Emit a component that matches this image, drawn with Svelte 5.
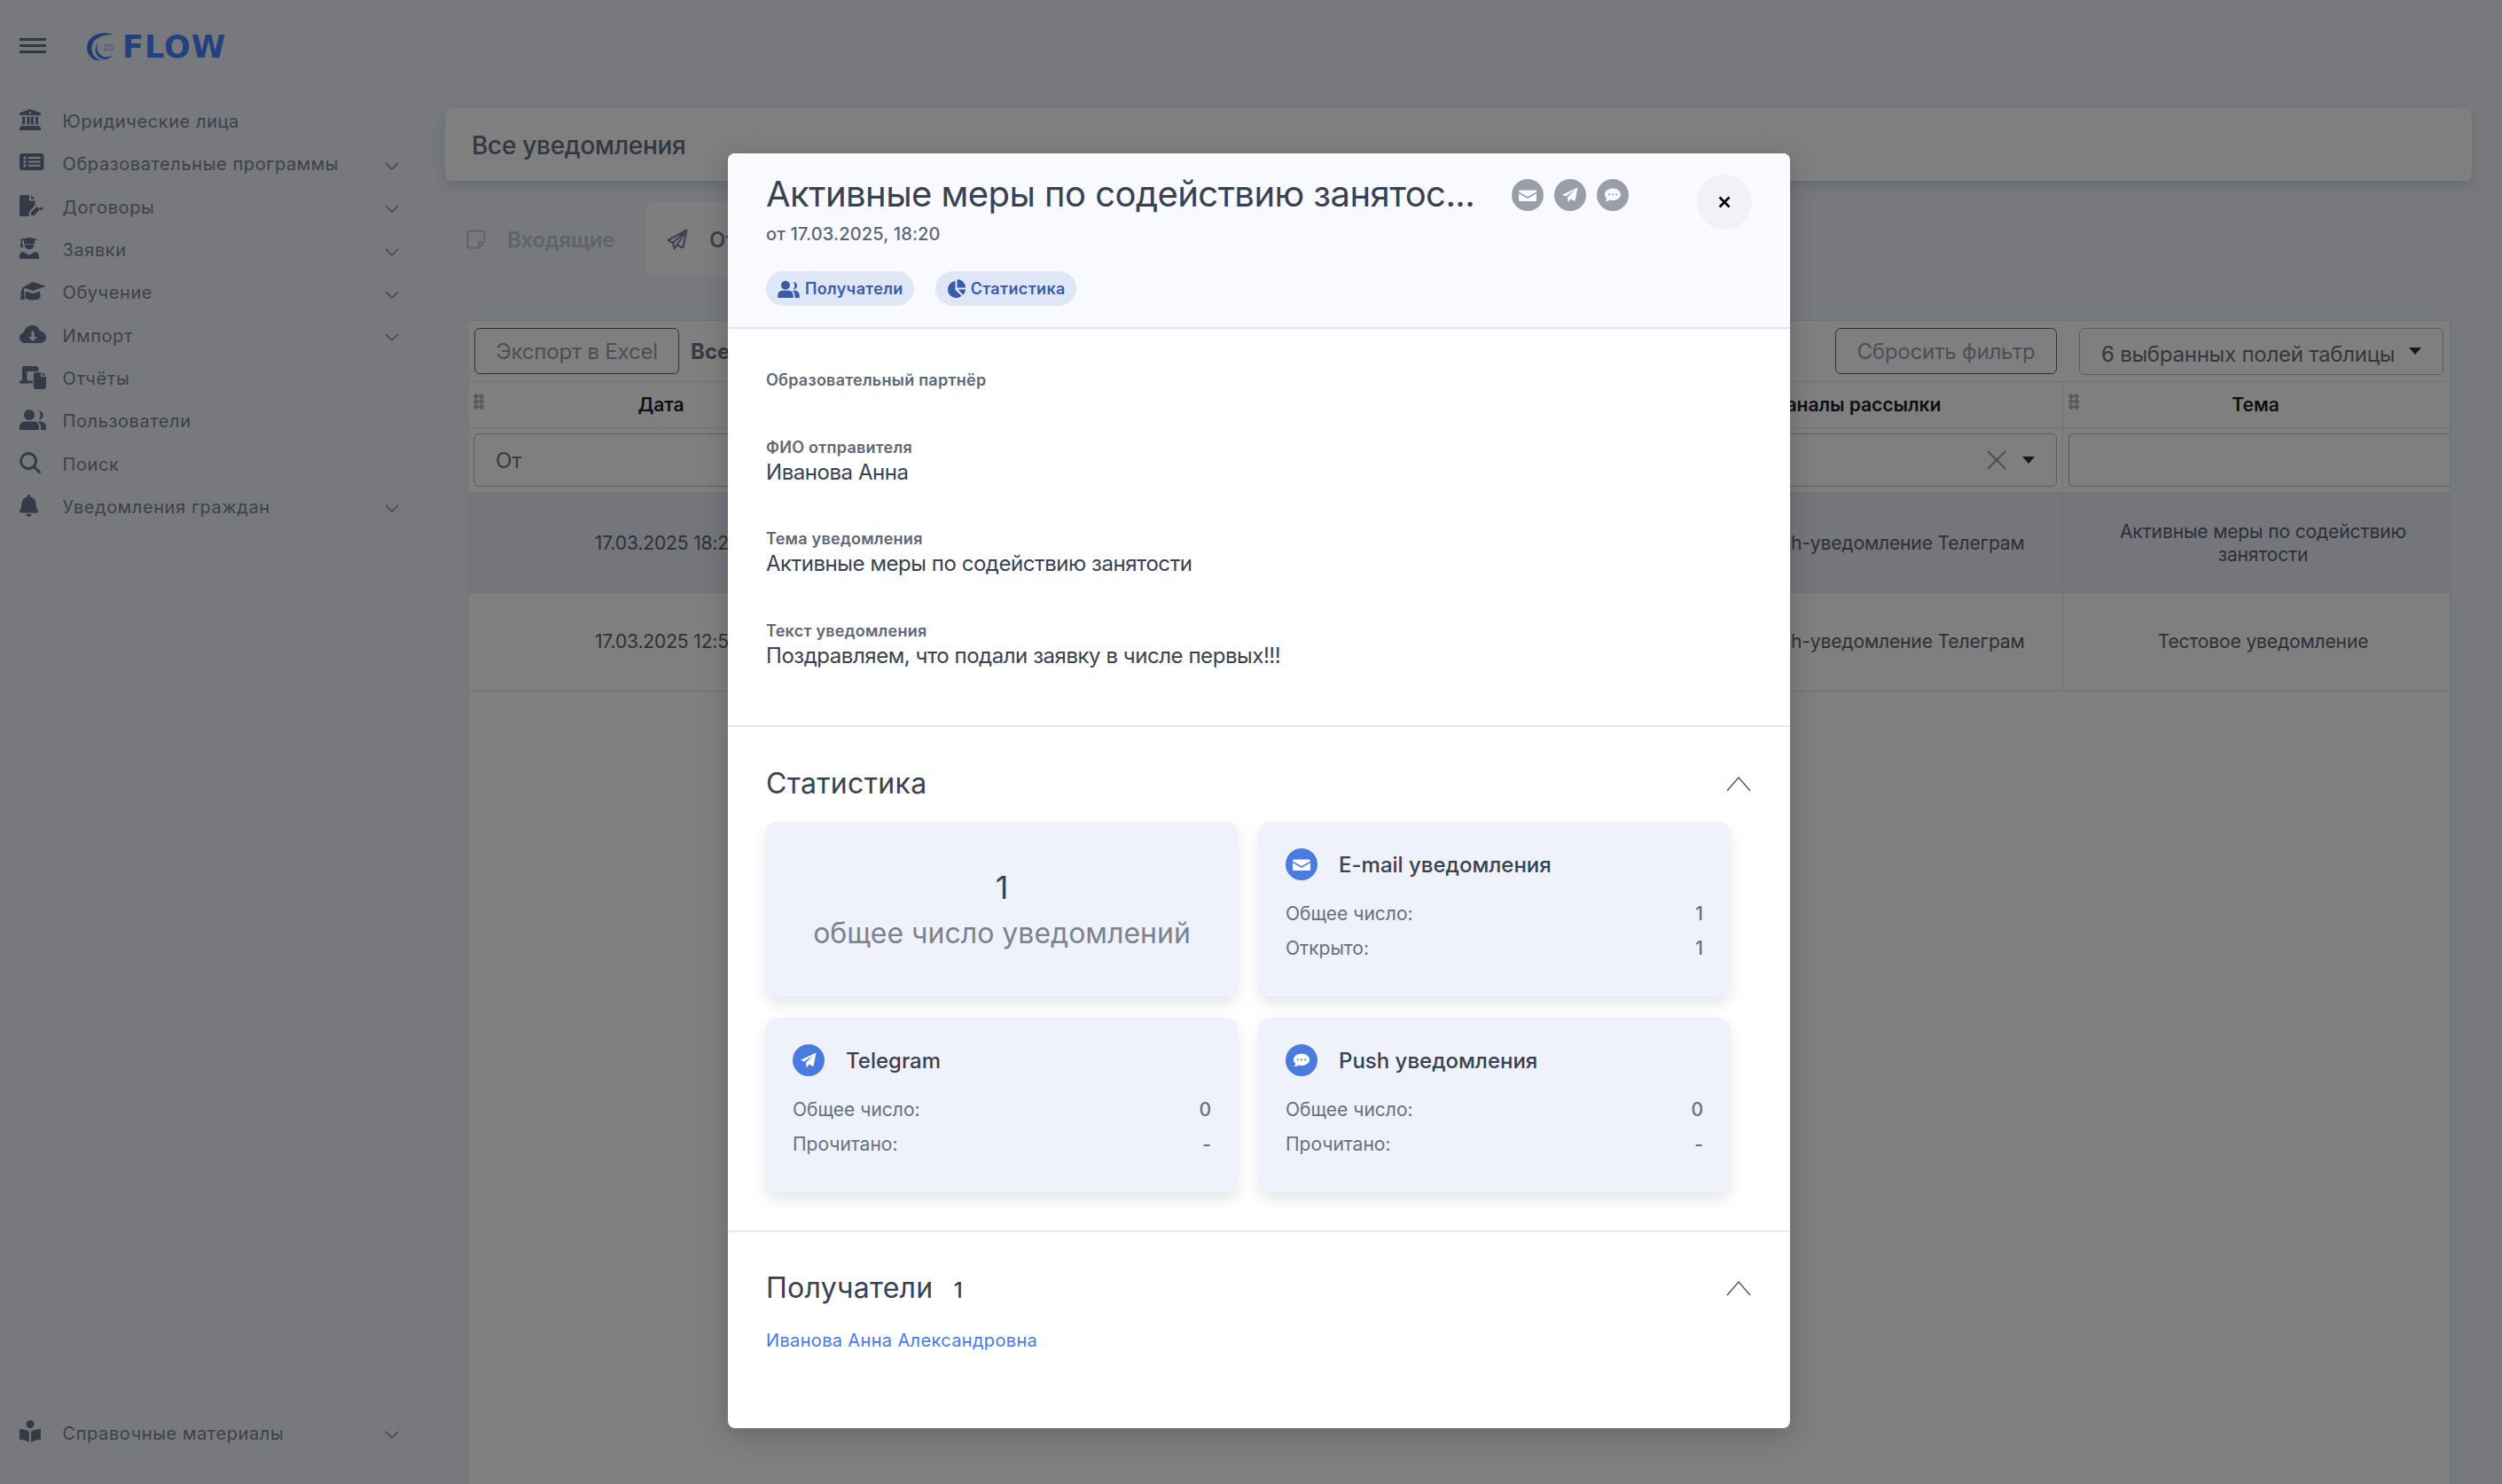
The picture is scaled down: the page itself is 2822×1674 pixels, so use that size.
<script>
	const nav = [
		{ label: 'Юридические лица', icon: 'bank' },
		{ label: 'Образовательные программы', icon: 'list', more: true },
		{ label: 'Договоры', icon: 'sign', more: true },
		{ label: 'Заявки', icon: 'student', more: true },
		{ label: 'Обучение', icon: 'cap', more: true },
		{ label: 'Импорт', icon: 'cloud', more: true },
		{ label: 'Отчёты', icon: 'report' },
		{ label: 'Пользователи', icon: 'users' },
		{ label: 'Поиск', icon: 'search' },
		{ label: 'Уведомления граждан', icon: 'bell', more: true }
	];

	const icons = {
		bank: 'M12 1 24 5.600V8H0V5.600ZM12 3.500a1.300 1.300 0 1 0 .01 0ZM3 9.500h3.200v9H3ZM8.400 9.500h3.200v9H8.400ZM12.800 9.500h3.200v9h-3.200ZM18 9.500h3.200v9H18ZM1.500 20h21v1.500H24V25H0v-3.500h1.500Z',
		list: 'M3 3h21.500a3 3 0 0 1 3 3v13a3 3 0 0 1-3 3H3a3 3 0 0 1-3-3V6a3 3 0 0 1 3-3ZM6 6.500a1.600 1.600 0 1 0 .01 0ZM6 10.900a1.600 1.600 0 1 0 .01 0ZM6 15.300a1.600 1.600 0 1 0 .01 0ZM10 7h13.500v2H10ZM10 11.500h13.500v2H10ZM10 15.800h13.500v2H10Z',
		sign: 'M2 1h9v6.500h6.500v5L11.500 19l-1 6H2a2 2 0 0 1-2-2V3a2 2 0 0 1 2-2ZM13 1l4.500 4.500H13ZM19.500 14l3.500 3.500-6.500 6.500H13v-3.500ZM24.500 14.500l2.500 1.500-2.500 2.500-2.500-2.500Z',
		student: 'M0 3 11 1l10 2-4 1.500V8H5V4.500l-2-.7v4.700h1V12H1v-3.500h.5V3.400ZM5.500 8.800h11a5.500 5.500 0 0 1-11 0ZM4.500 17l6.500 4 6.500-4c2.500 0 4.500 2 4.500 4.500V25H0v-3.500c0-2.500 2-4.500 4.500-4.500Z',
		cap: 'M15 3 30 8l-15 5-9-3c-.8 1-1.200 2-1.300 3.200.6.300 1 .9 1 1.600 0 .6-.3 1.100-.7 1.500L6 23H1l1-6.700c-.4-.4-.7-.9-.7-1.500 0-.7.4-1.300 1-1.600.1-1.500.6-2.800 1.500-4ZM7 13.500l8 2.500 8-2.500.7 6c0 2.500-4 4-8.700 4s-8.700-1.500-8.700-4Z',
		cloud: 'M15 3c3.800 0 7 2.700 7.800 6.300 4 .5 7.200 3.500 7.200 7.200 0 4-3.400 6.500-7.500 6.500H6.500C2.900 23 0 20.500 0 17c0-3 2-5.300 5-6C5.800 6.500 10 3 15 3ZM13.500 9.500v6.500H10l5 5 5-5h-3.500V9.500Z',
		report: 'M5 1h14c1.400 0 2.500 1 2.500 2.500V7H8.500v10.500H15v3H1.500A1.500 1.500 0 0 1 0 19v-1.500h3V3a2 2 0 0 1 2-2ZM18 8h6v5h6v12a2 2 0 0 1-2 2H18a2 2 0 0 1-2-2V10a2 2 0 0 1 2-2ZM25.500 8 30 11.500h-4.500Z',
		users: 'M11 2a6 6 0 1 1-.01 0ZM21.500 3a5.200 5.200 0 0 1 0 10.400c1.300-1.400 2-3.200 2-5.200s-.7-3.800-2-5.200ZM6 15.500h10c3.500 0 6 2.500 6 5.500V25H0v-4c0-3 2.500-5.500 6-5.500ZM20 15.500h4c3.500 0 6 2.500 6 5.500V25h-6v-4c0-2-1.400-4-4-5.500Z',
		search: 'M10 1a10 10 0 0 1 8 16l6.500 6.500-2.200 2.200L16 19.200A10 10 0 1 1 10 1ZM10 4a7 7 0 1 0 .01 0Z',
		bell: 'M10.500 1c1 0 1.700.7 1.700 1.700v.8c4 .8 6.300 4 6.300 8 0 5 2.500 6.500 2.500 8.500 0 .8-.6 1.400-1.500 1.400h-18C.6 21.400 0 20.800 0 20c0-2 2.500-3.500 2.500-8.500 0-4 2.300-7.200 6.300-8v-.8c0-1 .7-1.700 1.700-1.700ZM7.500 22.800h6a3 3 0 0 1-6 0Z',
		book: 'M12 0a4.500 4.500 0 1 1-.01 0ZM0 10c4 0 8 .7 11 3v12c-3-2-7-3-10-3-.6 0-1-.4-1-1ZM24 10c-4 0-8 .7-11 3v12c3-2 7-3 10-3 .6 0 1-.4 1-1Z'
	};

	const small = {
		users: 'M7.500 1.500a4.300 4.300 0 1 1-.01 0ZM15 2.500a3.700 3.700 0 0 1 0 7.400c.8-1 1.300-2.300 1.300-3.700s-.5-2.700-1.300-3.700ZM4.500 11h6c2.600 0 4.500 2 4.500 4.500V18H0v-2.500C0 13 2 11 4.500 11ZM14 11h2.500c2.600 0 4.500 2 4.500 4.500V18h-4.500v-2.500c0-1.800-1-3.400-2.500-4.500Z',
		pie: 'M9 2v9.500l6.800 6.300A9 9 0 1 1 9 2ZM11 0a9 9 0 0 1 9 9h-9ZM12 11h8a9 9 0 0 1-2.500 5.800Z'
	};

	const glyphs = {
		mail: 'M3.500 6.500h17a1.500 1.500 0 0 1 1.500 1.500v.5l-10 5.600L2 8.500V8a1.500 1.500 0 0 1 1.500-1.500ZM2 10.300l10 5.600 10-5.600v7.200a1.500 1.500 0 0 1-1.500 1.500h-17A1.500 1.500 0 0 1 2 17.500Z',
		plane: 'M20.500 3.500 17.500 19l-5-2.500-2.800 4-.7-5.700 8-8.300-10 7L3 11.800Z',
		chat: 'M12 4.500c5 0 9 3 9 6.800s-4 6.800-9 6.800c-1.200 0-2.300-.2-3.300-.5-1.300 1-3.200 1.700-5.200 1.700.8-1 1.700-2.300 1.900-3.700C4 15.200 3 13.400 3 11.300c0-3.800 4-6.800 9-6.800ZM7.800 10.200a1.100 1.100 0 1 0 .01 0ZM12 10.200a1.100 1.100 0 1 0 .01 0ZM16.200 10.200a1.100 1.100 0 1 0 .01 0Z'
	};

	const channels = [
		{ title: 'E-mail уведомления', glyph: 'mail', second: 'Открыто:', total: '1', seen: '1' },
		{ title: 'Telegram', glyph: 'plane', second: 'Прочитано:', total: '0', seen: '-' },
		{ title: 'Push уведомления', glyph: 'chat', second: 'Прочитано:', total: '0', seen: '-' }
	];
</script>

<div class="page">
	<aside class="side">
		<div class="brand">
			<div class="burger"><i></i><i></i><i></i></div>
			<svg class="crescent" width="32" height="34" viewBox="0 0 32 34">
				<path d="M30 3C20-1 5 2 1.500 14-1 25 8 34 17 32 9 30 4 21 7.500 13 11 6 20 3 30 3Z" fill="#3f78f0"/>
				<path d="M15 11C8 17 9 27 18 30.500c5 1.500 10-.5 12-5-4 3.500-10 4-14.500-.5C11.500 21 11.500 15 15 11Z" fill="#4680ff"/>
				<text x="19.500" y="21" font-size="9.500" font-family="Inter, sans-serif" font-weight="500" fill="#8aaeee">25</text>
			</svg>
			<span class="flow">FLOW</span>
		</div>
		<nav>
			{#each nav as item}
				<div class="item">
					<svg class="ic" width="30" height="27" viewBox="0 0 30 27"><path d={icons[item.icon]} fill-rule="evenodd"/></svg>
					<span>{item.label}</span>
					{#if item.more}
						<svg class="chev" width="16" height="9" viewBox="0 0 16 9"><path d="M1 1l7 7 7-7" fill="none" stroke="currentColor" stroke-width="1.2"/></svg>
					{/if}
				</div>
			{/each}
		</nav>
		<div class="item bottom">
			<svg class="ic" width="30" height="27" viewBox="0 0 30 27"><path d={icons.book} fill-rule="evenodd"/></svg>
			<span>Справочные материалы</span>
			<svg class="chev" width="16" height="9" viewBox="0 0 16 9"><path d="M1 1l7 7 7-7" fill="none" stroke="currentColor" stroke-width="1.2"/></svg>
		</div>
	</aside>

	<main>
		<div class="bar">Все уведомления</div>
		<div class="tabs">
			<div class="tab">
				<svg width="22" height="22" viewBox="0 0 22 22"><path d="M3 1.500h16A1.500 1.500 0 0 1 20.500 3v10L14 20.500H3A1.500 1.500 0 0 1 1.500 19V3A1.500 1.500 0 0 1 3 1.500ZM14 20v-5a1 1 0 0 1 1-1h5" fill="none" stroke="currentColor" stroke-width="2"/></svg>
				<span>Входящие</span>
			</div>
			<div class="tab active">
				<svg width="24" height="24" viewBox="0 0 24 24"><path d="M22.500 1.500 18.500 21.500l-7-3-3 4-1.500-6.500L1.500 13ZM7 16 22.500 1.500 11.500 18.500" fill="none" stroke="currentColor" stroke-width="2" stroke-linejoin="round"/></svg>
				<span>Отправленные</span>
			</div>
		</div>

		<section class="table">
			<div class="tools">
				<button class="btn">Экспорт в Excel</button>
				<b>Все</b>
				<button class="btn reset">Сбросить фильтр</button>
				<div class="fields">6 выбранных полей таблицы <i class="caret"></i></div>
			</div>
			<div class="row head-row">
				<div class="cell"><span class="grip"></span><span class="date-h">Дата</span></div>
				<div class="cell"></div>
				<div class="cell"><span class="chan-h">Каналы рассылки</span></div>
				<div class="cell"><span class="grip"></span><span class="topic-h">Тема</span></div>
			</div>
			<div class="row filter-row">
				<div class="cell"><div class="input">От</div></div>
				<div class="cell"></div>
				<div class="cell"><div class="input pick">
					<svg width="22" height="22" viewBox="0 0 22 22"><path d="M1 1l20 20M21 1 1 21" stroke="#9e9e9e" stroke-width="2"/></svg>
					<i class="caret"></i>
				</div></div>
				<div class="cell"><div class="input open"></div></div>
			</div>
			<div class="row data selected">
				<div class="cell">17.03.2025 18:20</div>
				<div class="cell"></div>
				<div class="cell">Push-уведомление Телеграм</div>
				<div class="cell">Активные меры по содействию занятости</div>
			</div>
			<div class="row data">
				<div class="cell">17.03.2025 12:50</div>
				<div class="cell"></div>
				<div class="cell">Push-уведомление Телеграм</div>
				<div class="cell">Тестовое уведомление</div>
			</div>
		</section>
	</main>

	<div class="overlay"></div>

	<div class="modal">
		<header>
			<div class="lead">
				<div class="title-row">
					<h1>Активные меры по содействию занятос...</h1>
					{#each ['mail', 'plane', 'chat'] as g}
						<svg class="round" width="36" height="36" viewBox="-6 -6 36 36"><circle cx="12" cy="12" r="18" fill="#9a9ea9"/><path d={glyphs[g]} fill="#f9faff" fill-rule="evenodd"/></svg>
					{/each}
				</div>
				<div class="date">от 17.03.2025, 18:20</div>
				<div class="pills">
					<span class="pill"><svg width="25" height="21" viewBox="0 0 21 18"><path d={small.users} fill-rule="evenodd"/></svg>Получатели</span>
					<span class="pill"><svg width="21" height="21" viewBox="0 0 20 20"><path d={small.pie} fill-rule="evenodd"/></svg>Статистика</span>
				</div>
			</div>
			<button class="close" aria-label="Закрыть"><svg width="14" height="14" viewBox="0 0 14 14"><path d="M1.500 1.500l11 11M12.500 1.500l-11 11" stroke="#000" stroke-width="2.600"/></svg></button>
		</header>

		<div class="info">
			<div class="field"><span class="lbl">Образовательный партнёр</span><p></p></div>
			<div class="field"><span class="lbl">ФИО отправителя</span><p>Иванова Анна</p></div>
			<div class="field"><span class="lbl">Тема уведомления</span><p>Активные меры по содействию занятости</p></div>
			<div class="field"><span class="lbl">Текст уведомления</span><p>Поздравляем, что подали заявку в числе первых!!!</p></div>
		</div>

		<section class="block stats">
			<div class="block-head">
				<h2>Статистика</h2>
				<svg width="28" height="18" viewBox="0 0 28 18"><path d="M1 17 14 2l13 15" fill="none" stroke="#4b5263" stroke-width="1.400"/></svg>
			</div>
			<div class="cards">
				<div class="card total">
					<strong>1</strong>
					<span>общее число уведомлений</span>
				</div>
				{#each channels as c}
					<div class="card">
						<div class="card-title">
							<svg width="36" height="36" viewBox="-6 -6 36 36"><circle cx="12" cy="12" r="18" fill="#4a7bdf"/><path d={glyphs[c.glyph]} fill="#fff" fill-rule="evenodd"/></svg>
							<span>{c.title}</span>
						</div>
						<div class="line"><span>Общее число:</span><em>{c.total}</em></div>
						<div class="line"><span>{c.second}</span><em>{c.seen}</em></div>
					</div>
				{/each}
			</div>
		</section>

		<section class="block people">
			<div class="block-head">
				<h2>Получатели <small>1</small></h2>
				<svg width="28" height="18" viewBox="0 0 28 18"><path d="M1 17 14 2l13 15" fill="none" stroke="#4b5263" stroke-width="1.400"/></svg>
			</div>
			<a href="#top">Иванова Анна Александровна</a>
		</section>
	</div>
</div>

<style>
	:global(body) {
		margin: 0;
		font-family: Inter, "Noto Sans", sans-serif;
		background: #f0f3fb;
	}
	.page {
		position: relative;
		width: 2822px;
		height: 1674px;
		overflow: hidden;
		display: flex;
		background: #f0f3fb;
	}

	.side {
		width: 502px;
		flex: none;
		height: 100%;
		display: flex;
		flex-direction: column;
		padding-left: 22px;
		box-sizing: border-box;
		color: #7a8295;
	}
	.brand {
		display: flex;
		align-items: center;
		height: 34px;
		margin-top: 36px;
		margin-bottom: 43px;
	}
	.burger {
		width: 30px;
		display: flex;
		flex-direction: column;
		gap: 4.500px;
		margin-right: 45px;
		margin-top: -3px;
	}
	.burger i {
		height: 2.500px;
		background: #6a7186;
	}
	.crescent {
		margin-right: 9px;
	}
	.flow {
		font-family: "DejaVu Sans", sans-serif;
		font-size: 35px;
		line-height: 34px;
		font-weight: 700;
		color: #4680ff;
		letter-spacing: 1px;
	}
	.item {
		height: 48.300px;
		display: flex;
		align-items: center;
		font-size: 20px;
		letter-spacing: 0.6px;
	}
	.ic {
		width: 30px;
		margin: -3px 18.500px 0 0;
		fill: #6a7390;
		flex: none;
	}
	.chev {
		position: absolute;
		left: 434px;
		margin-top: 4px;
		color: #6f7689;
	}
	.bottom {
		margin-top: auto;
		margin-bottom: 33px;
	}

	main {
		flex: 1;
		min-width: 0;
		padding-top: 122px;
	}
	.bar {
		width: 2286px;
		height: 82px;
		box-sizing: border-box;
		padding: 2px 0 0 30px;
		display: flex;
		align-items: center;
		background: #fff;
		border-radius: 8px;
		box-shadow: 0 6px 16px rgba(60, 70, 90, 0.16);
		font-size: 28px;
		font-weight: 500;
		letter-spacing: -0.3px;
		color: #666e84;
	}
	.tabs {
		display: flex;
		align-items: center;
		height: 84px;
		margin-top: 24px;
		margin-left: 24px;
		font-size: 24px;
		font-weight: 600;
		letter-spacing: -0.2px;
		color: #bfc6d6;
	}
	.tab {
		display: flex;
		align-items: center;
		gap: 24px;
		height: 84px;
		width: 202px;
	}
	.tab.active {
		width: 400px;
		padding-left: 24px;
		border-radius: 10px;
		background: #fdfdfe;
		color: #7a8296;
	}

	.table {
		margin-top: 49px;
		margin-left: 25px;
		width: 2237px;
		height: 1400px;
		background: #fff;
		border: 1px solid #e2e4e8;
		box-sizing: border-box;
		color: #62687a;
	}
	.tools {
		height: 69px;
		display: flex;
		align-items: center;
		padding: 0 7px;
		box-sizing: border-box;
		border-bottom: 1px solid #e2e4e8;
		font-size: 24px;
	}
	.tools b {
		margin-left: 13px;
		color: #6b7388;
	}
	.btn {
		width: 231px;
		height: 52px;
		border: 1.500px solid #5c6478;
		border-radius: 6px;
		background: none;
		font: inherit;
		font-size: 24px;
		letter-spacing: -0.2px;
		color: #969eb2;
		padding: 0;
	}
	.reset {
		width: 250px;
		margin-left: auto;
	}
	.fields {
		width: 411px;
		height: 53px;
		margin-left: 25px;
		margin-right: 0;
		box-sizing: border-box;
		padding: 6px 24px 0;
		display: flex;
		align-items: center;
		justify-content: space-between;
		border: 1.500px solid #b6bac2;
		border-radius: 6px;
		color: #6a6e78;
		white-space: nowrap;
		letter-spacing: -0.25px;
	}
	.caret {
		display: inline-block;
		width: 0;
		height: 0;
		border: 7px solid transparent;
		border-top: 8px solid #333;
		border-bottom: 0;
	}
	.fields .caret {
		margin: -6px 0 0 0;
	}
	.row {
		display: grid;
		grid-template-columns: 450px 968px 380px 1fr;
		border-bottom: 1px solid #e2e4e8;
	}
	.head-row {
		height: 51px;
		font-size: 21px;
		font-weight: 600;
		color: #1e1e1e;
	}
	.filter-row {
		height: 75px;
		border-bottom: 3px solid #e8e9ec;
		box-sizing: border-box;
	}
	.data {
		height: 110px;
		font-size: 21px;
		line-height: 26px;
		letter-spacing: -0.12px;
		color: #5a5f6c;
		text-align: center;
	}
	.data .cell {
		padding: 0 64px;
	}
	.data .cell:nth-child(3) {
		padding: 0 5px 0 0;
		white-space: nowrap;
		justify-content: center;
	}
	.data .cell:nth-child(4) {
		padding: 0 45px 0 60px;
	}
	.selected {
		background: #ebedf6;
	}
	.cell {
		position: relative;
		display: flex;
		align-items: center;
		justify-content: center;
		min-width: 0;
	}
	.cell:nth-child(4) {
		border-left: 1px solid #e2e4e8;
	}
	.grip {
		position: absolute;
		left: 6px;
		top: 13px;
		width: 12px;
		height: 18px;
		background: radial-gradient(circle, #b4b8c2 2.500px, transparent 3px) 0 0 / 6px 6px;
	}
	.date-h {
		margin-left: -15px;
	}
	.chan-h {
		margin-left: -83px;
	}
	.topic-h {
		margin-left: -2px;
	}
	.input {
		width: 100%;
		height: 60px;
		margin: 0 6px;
		box-sizing: border-box;
		border: 1.500px solid #b8bbc2;
		border-radius: 6px;
		display: flex;
		align-items: center;
		padding: 0 24px;
		font-size: 24px;
		color: #777;
	}
	.pick {
		justify-content: flex-end;
		gap: 18px;
	}
	.open {
		margin-right: 0;
		border-right: 0;
		border-radius: 6px 0 0 6px;
	}

	.overlay {
		position: absolute;
		inset: 0;
		background: rgba(0, 0, 0, 0.5);
	}

	.modal {
		position: absolute;
		left: 821px;
		top: 173px;
		width: 1198px;
		height: 1438px;
		background: #fff;
		border-radius: 8px;
		overflow: hidden;
		box-shadow: 0 8px 30px rgba(0, 0, 0, 0.2);
		color: #3a4150;
	}
	header {
		height: 198px;
		box-sizing: border-box;
		padding: 24px 43px 0;
		display: flex;
		justify-content: space-between;
		background: #f9faff;
		border-bottom: 2px solid #dfe6f5;
	}
	.title-row {
		display: flex;
		align-items: flex-start;
		gap: 12px;
	}
	h1 {
		width: 829px;
		margin: -2px 0 0;
		font-size: 40px;
		line-height: 48px;
		font-weight: 400;
		letter-spacing: -0.55px;
		white-space: nowrap;
	}
	.round {
		margin-top: 5px;
	}
	.date {
		margin-top: 9px;
		font-size: 20px;
		line-height: 24px;
		font-weight: 500;
		letter-spacing: 0.15px;
		color: #5f6675;
	}
	.pills {
		display: flex;
		gap: 24px;
		margin-top: 30px;
	}
	.pill {
		height: 39px;
		box-sizing: border-box;
		padding: 0 12px 0 13px;
		display: flex;
		align-items: center;
		gap: 6px;
		border-radius: 20px;
		background: #dfe7f7;
		color: #3a5ca8;
		font-size: 18px;
		font-weight: 600;
		letter-spacing: 0.35px;
	}
	.pill svg {
		fill: #3a5ca8;
	}
	.close {
		width: 62px;
		height: 62px;
		border: 0;
		border-radius: 50%;
		background: #f0f2f7;
		display: flex;
		align-items: center;
		justify-content: center;
		padding: 0;
	}

	.info {
		height: 447px;
		box-sizing: border-box;
		padding: 48px 43px 0;
	}
	.field {
		margin-bottom: 50.500px;
	}
	.lbl {
		display: block;
		font-size: 18px;
		line-height: 20px;
		font-weight: 600;
		letter-spacing: 0.25px;
		color: #5f6675;
	}
	.field p {
		margin: 3px 0 0;
		min-height: 2px;
		font-size: 24px;
		line-height: 30px;
		letter-spacing: -0.45px;
	}
	.block {
		border-top: 2px solid #e6e9f0;
		box-sizing: border-box;
		padding: 44px 44px 0 43px;
	}
	.stats {
		height: 570px;
	}
	.block-head {
		display: flex;
		justify-content: space-between;
		align-items: center;
		height: 40px;
	}
	h2 {
		margin: 0;
		font-size: 32px;
		font-weight: 400;
		line-height: 40px;
		letter-spacing: 0.3px;
	}
	.people {
		padding-top: 43px;
	}
	.people h2 {
		margin-top: 3px;
	}
	h2 small {
		margin-left: 14px;
		font-size: 24px;
		font-weight: 500;
	}
	.cards {
		width: 1087px;
		margin-top: 23px;
		display: grid;
		grid-template-columns: 532px 531px;
		grid-auto-rows: 197px;
		gap: 24px;
	}
	.card {
		background: #eff2fa;
		border-radius: 12px;
		box-shadow: 0 8px 16px rgba(40, 50, 80, 0.12);
		padding: 30px;
		box-sizing: border-box;
	}
	.total {
		display: flex;
		flex-direction: column;
		align-items: center;
		padding-top: 52px;
	}
	.total strong {
		font-size: 36px;
		line-height: 44px;
		font-weight: 400;
	}
	.total span {
		margin-top: 10px;
		font-size: 32px;
		line-height: 40px;
		color: #7b8291;
	}
	.card-title {
		display: flex;
		align-items: center;
		gap: 24px;
		height: 36px;
		margin-bottom: 24px;
		font-size: 24px;
		font-weight: 500;
	}
	.line {
		display: flex;
		justify-content: space-between;
		height: 39px;
		line-height: 27px;
		font-size: 21px;
		color: #667082;
	}
	.line em {
		font-style: normal;
		font-weight: 500;
	}
	a {
		display: block;
		margin-top: 27px;
		font-size: 20px;
		line-height: 24px;
		letter-spacing: 0.35px;
		color: #4a7adf;
		text-decoration: none;
	}
</style>
